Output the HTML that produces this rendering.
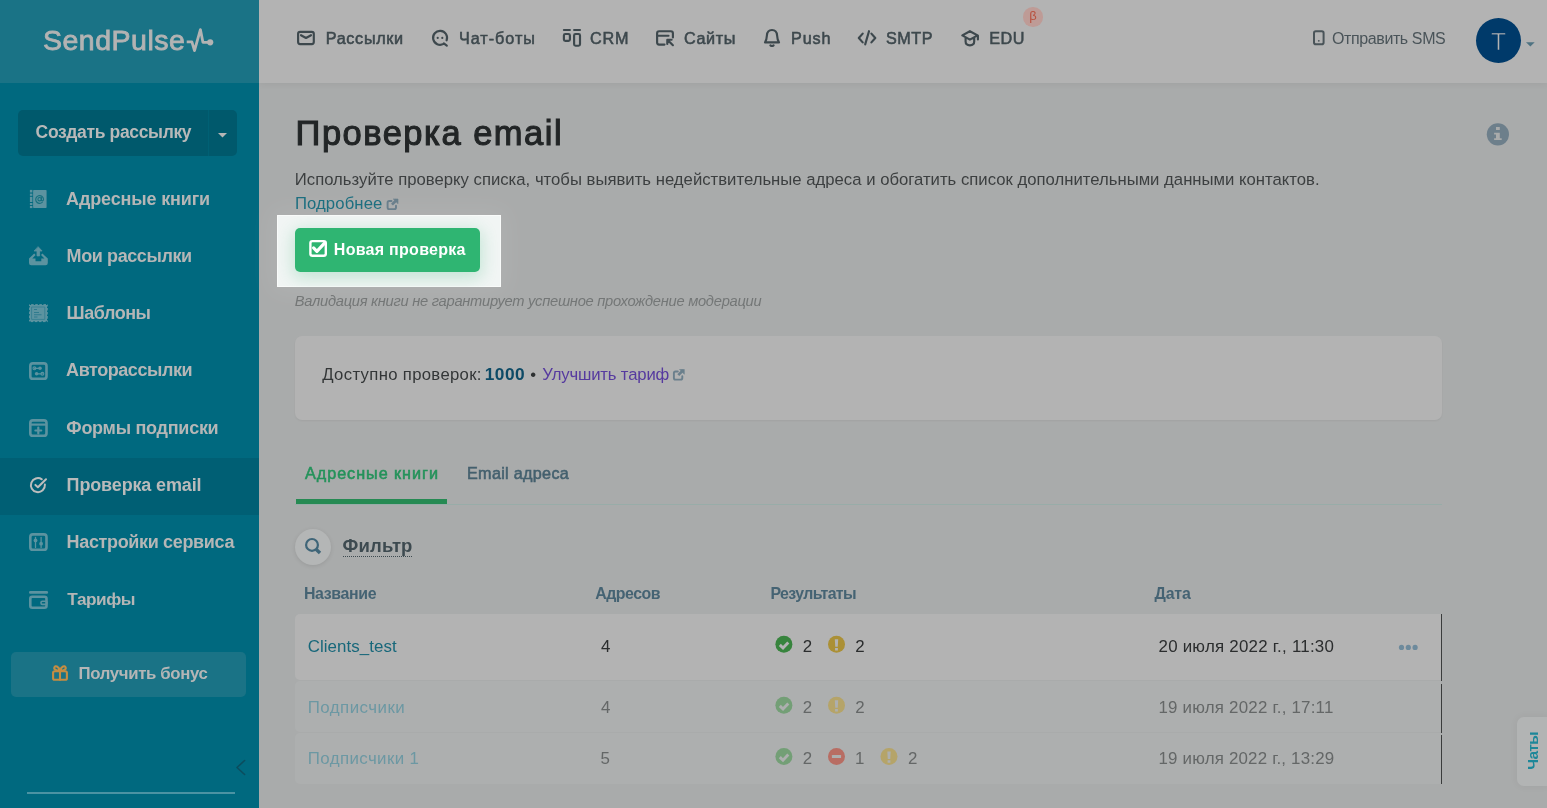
<!DOCTYPE html>
<html lang="ru">
<head>
<meta charset="utf-8">
<title>Проверка email</title>
<style>
*{box-sizing:border-box;margin:0;padding:0}
html,body{width:1547px;height:808px;overflow:hidden}
body{position:relative;background:#a9abab;font-family:"Liberation Sans",sans-serif}
.t{position:absolute;white-space:nowrap;line-height:normal}
#txt{position:absolute;left:0;top:0;width:1547px;height:808px;will-change:transform}
svg{position:absolute;overflow:visible}
/* sidebar */
#side{position:absolute;left:0;top:0;width:259px;height:808px;background:#00697f}
#sidehead{position:absolute;left:0;top:0;width:259px;height:83px;background:#1a7386}
#createbtn{position:absolute;left:18px;top:110px;width:219px;height:45.5px;border-radius:5px;background:#00596c}
#createbtn i{position:absolute;left:190px;top:0;width:1px;height:100%;background:#006074}
#active{position:absolute;left:0;top:458px;width:259px;height:56.5px;background:#005f74}
#bonusbtn{position:absolute;left:11px;top:652px;width:235px;height:45px;border-radius:5px;background:#1a7386}
#sideline{position:absolute;left:27px;top:792px;width:208px;height:2px;background:#4b93a3}
/* top */
#top{position:absolute;left:259px;top:0;width:1288px;height:83px;background:#b3b3b3;box-shadow:0 1px 7px rgba(0,0,0,.06)}
#avatar{position:absolute;left:1475.7px;top:18px;width:45px;height:45px;border-radius:50%;background:#003a6a}
#betab{position:absolute;left:1023px;top:7px;width:19.5px;height:19.5px;border-radius:50%;background:#be9b96}
/* main */
#hl{position:absolute;left:277px;top:215px;width:224px;height:72px;background:#f1f5f4;box-shadow:inset 0 0 0 1px rgba(255,255,255,.55),0 0 24px 6px rgba(255,255,255,.08)}
#hl .glow{position:absolute;left:0;top:0;width:100%;height:100%;overflow:hidden}
#hl .glow b{position:absolute;left:18px;top:13px;width:185px;height:44px;border-radius:5px;box-shadow:0 4px 16px 2px rgba(47,181,112,.24)}
#gbtn{position:absolute;left:295px;top:228px;width:185px;height:44px;border-radius:5px;background:#2fb572}
#card{position:absolute;left:295px;top:336px;width:1147px;height:84px;border-radius:7px;background:#b3b3b3;box-shadow:0 1px 2px rgba(0,0,0,.05)}
#tabline{position:absolute;left:295px;top:504px;width:1147px;height:1px;background:#98aca8}
#tabact{position:absolute;left:295.5px;top:499px;width:151.5px;height:5px;background:#268a53}
#fcircle{position:absolute;left:295px;top:529px;width:36px;height:36px;border-radius:50%;background:#b4b6b6;box-shadow:0 1px 4px rgba(0,0,0,.10)}
#fdots{position:absolute;left:343px;top:556px;width:69px;height:0;border-top:1px dotted #3d4a50}
.row{position:absolute;left:295px;width:1146px;border-radius:5px 0 0 5px}
#row1{top:614px;height:66px;background:#b3b3b3}
#row2{top:681px;height:50.6px;background:#adafaf}
#row3{top:732.8px;height:51px;background:#adafaf}
#vline{position:absolute;left:1441px;top:614px;width:1px;height:170px;background:#3a3c3c}
.vgap{position:absolute;left:1441px;width:1px;background:#a9abab}
#chat{will-change:transform;position:absolute;left:1517px;top:717px;width:30px;height:69px;border-radius:7px 0 0 7px;background:#b2b4b4;box-shadow:0 0 8px rgba(0,0,0,.05)}
#chat span{position:absolute;left:16.4px;top:34px;transform:translate(-50%,-50%) rotate(-90deg);font-weight:700;font-size:15.5px;color:#1d8799;white-space:nowrap;letter-spacing:-.75px;line-height:normal}
.dotc{position:absolute;width:17px;height:17px;border-radius:50%}
</style>
</head>
<body>
<div id="top"></div>
<div id="side"></div>
<div id="sidehead"></div>
<div id="createbtn"><i></i></div>
<div id="active"></div>
<div id="bonusbtn"></div>
<div id="sideline"></div>
<div id="avatar"></div>
<div id="betab"></div>
<div id="hl"><div class="glow"><b></b></div></div>
<div id="gbtn"></div>
<div id="card"></div>
<div id="tabline"></div>
<div id="tabact"></div>
<div id="fcircle"></div>
<div id="fdots"></div>
<div class="row" id="row1"></div>
<div class="row" id="row2"></div>
<div class="row" id="row3"></div>
<div id="vline"></div>
<div class="vgap" style="top:681.3px;height:2.6px"></div>
<div class="vgap" style="top:733.2px;height:2.2px"></div>
<div id="chat"><span>Чаты</span></div>
<svg id="icons" width="1547" height="808" viewBox="0 0 1547 808" style="left:0;top:0" fill="none" stroke-linecap="round" stroke-linejoin="round">
<!-- logo pulse -->
<path d="M186.7 41.8H191.9L194.5 50.6L200.4 29.6L202.9 42.3H208" stroke="#b3b3b3" stroke-width="2.8" stroke-linejoin="round" stroke-linecap="butt"/>
<circle cx="210.2" cy="42.3" r="3.1" fill="#b3b3b3"/>
<!-- create caret -->
<path d="M218 133H227L222.5 137.5Z" fill="#b5b6b6"/>
<!-- sidebar icons -->
<g fill="#5c93a0">
 <rect x="33.1" y="189.9" width="13.5" height="18.2" rx="0.8"/>
 <rect x="29.9" y="189.9" width="2.5" height="2.6"/><rect x="29.9" y="193.6" width="2.5" height="2.2"/><rect x="29.9" y="196.8" width="2.5" height="5.2"/><rect x="29.9" y="203" width="2.5" height="2"/><rect x="29.9" y="205.9" width="2.5" height="2.2"/>
</g>
<path d="M42.2 202.4A3.9 3.9 0 1 1 43.5 199.2Q43.4 200.9 42.3 200.9Q41.4 200.9 41.4 199.8V197.6" stroke="#16707f" stroke-width="1.15"/><circle cx="39.6" cy="199.2" r="1.7" stroke="#16707f" stroke-width="1.1"/>
<!-- outbox -->
<path d="M38.3 246.9L42.1 251H39.6V255.9H37V251H34.5Z" fill="#5c93a0" stroke="#5c93a0" stroke-width="0.8"/>
<path fill-rule="evenodd" d="M34.2 253.6L29 258.4V263Q29 265.3 31.3 265.3H45.5Q47.8 265.3 47.8 263V258.4L42.4 253.6L41 255L44.5 258.6H41.3V261.2H35.5V258.6H32.3L35.6 255Z" fill="#5c93a0"/>
<!-- stamp -->
<rect x="29" y="304.1" width="18.8" height="18" fill="#5c93a0"/>
<rect x="29" y="304.1" width="18.8" height="18" stroke="#00697f" stroke-width="1.6" stroke-dasharray="1.5 2.6" stroke-dashoffset="-0.6" stroke-linecap="butt"/>
<rect x="32" y="307" width="12.8" height="12.4" stroke="#3a8193" stroke-width="1"/>
<path d="M34 309.5H37M34 312.5H39M34 314.7H41.5M34 317H37.5" stroke="#2f7b8e" stroke-width="1.1" stroke-linecap="butt"/>
<!-- automation -->
<g stroke="#5c93a0">
 <rect x="30.3" y="363.4" width="16.2" height="15.4" rx="2.6" stroke-width="2.6"/>
 <path d="M34.4 368.3H40M36.6 373.8H42.4" stroke-width="1.2"/>
 <circle cx="34.4" cy="368.3" r="1.4" stroke-width="1.1"/><circle cx="40" cy="368.3" r="1.8" fill="#5c93a0" stroke="none"/>
 <circle cx="36.6" cy="373.8" r="1.8" fill="#5c93a0" stroke="none"/><circle cx="42.4" cy="373.8" r="1.4" stroke-width="1.1"/>
<!-- form -->
 <rect x="30.3" y="420.4" width="16.2" height="15.4" rx="2.6" stroke-width="2.6"/>
 <path d="M31 424.6H46" stroke-width="2.2" stroke-linecap="butt"/>
 <path d="M38.3 427.6V433.4M35.4 430.5H41.2" stroke-width="2.2"/>
<!-- settings -->
 <rect x="30.3" y="534.4" width="16.2" height="15.4" rx="2.6" stroke-width="2.6"/>
 <path d="M35.5 537.3V547.4M41.1 537.3V547.4" stroke-width="1.3"/>
 <circle cx="35.5" cy="540.4" r="1.9" fill="#5c93a0" stroke="none"/><circle cx="41.1" cy="543.7" r="1.9" fill="#5c93a0" stroke="none"/>
<!-- wallet -->
 <path d="M30.3 592.4H46.8" stroke-width="2.6"/>
 <rect x="30.3" y="596.7" width="16.2" height="11.1" rx="2" stroke-width="2.6"/>
 <rect x="41" y="601.2" width="6" height="3.2" rx="1.4" stroke-width="1.6"/>
</g>
<!-- check circle (active) -->
<path d="M41.8 479.3A7 7 0 1 0 44.9 484.6" stroke="#bdbdbd" stroke-width="2"/>
<path d="M35.4 484.9L37.9 487.2L46 479.2" stroke="#bdbdbd" stroke-width="2"/>
<!-- gift -->
<g stroke="#c58d42" stroke-width="2.1">
 <rect x="53.1" y="671.2" width="13.8" height="8.6" rx="1.6"/>
 <path d="M60 671.2V679.8"/>
 <path d="M60 670.8C58.5 666 55.2 665.2 54.4 667.4C53.6 669.6 56.5 670.6 60 670.8C61.5 666 64.8 665.2 65.6 667.4C66.4 669.6 63.5 670.6 60 670.8Z"/>
</g>
<!-- sidebar chevron -->
<path d="M244.6 760.5L237 767.5L244.6 774.5" stroke="#0b4d5e" stroke-width="1.6"/>
<!-- top nav icons -->
<g stroke="#3d484d" stroke-width="2.15">
 <rect x="298.1" y="31.8" width="15.7" height="12.3" rx="2"/>
 <path d="M301 35.2L306 38L311 35.2"/>
 <path d="M446.6 40.3A7 7 0 1 0 443.5 43.9M443.8 43.4L446.8 45.6"/>
 <path d="M563.9 30H569.9M574.1 30H580"/>
 <rect x="563.9" y="34" width="6" height="6.8" rx="1.4"/>
 <rect x="574.1" y="34" width="5.9" height="11.7" rx="1.4"/>
 <path d="M664.5 44.6H659.1Q657.1 44.6 657.1 42.6V33.2Q657.1 31.2 659.1 31.2H670.9Q672.9 31.2 672.9 33.2V37.5M657.5 35.7H668.5"/>
 <path d="M672.9 45.2L667.6 40M667.3 44V39.7H671.6"/>
 <path d="M765 42.4H779C777.6 40.5 777.3 38.8 777.1 35.5C776.9 32.2 774.8 30 772 30C769.2 30 767.1 32.2 766.9 35.5C766.7 38.8 766.4 40.5 765 42.4Z"/>
 <path d="M770.4 45.4Q772 46.6 773.6 45.4"/>
 <path d="M862.7 33.6L858.8 38L862.7 42.4M871.4 33.6L875.3 38L871.4 42.4M869 31.2L865.2 44.4"/>
 <path d="M969.9 31.2L962.3 35.4L969.9 39.6L977.6 35.4ZM977.9 35.6V39.4M965.6 38V41.6Q965.6 45.3 969.9 45.3Q974.2 45.3 974.2 41.6V38"/>
</g>
<circle cx="437.7" cy="37.9" r="1.1" fill="#3d484d"/><circle cx="442.3" cy="37.9" r="1.1" fill="#3d484d"/>
<!-- phone -->
<rect x="1314" y="31.2" width="9.6" height="13" rx="1.8" stroke="#4a5459" stroke-width="2"/>
<circle cx="1318.8" cy="40.8" r="0.9" fill="#4a5459"/>
<!-- avatar caret -->
<path d="M1526 42.2H1534.7L1530.35 46.4Z" fill="#4f7382"/>
<!-- info -->
<circle cx="1497.9" cy="134.3" r="11.1" fill="#6d7f8b"/>
<path d="M1496 127.1H1499.8V130.1H1496ZM1494.1 132.8H1499.8V138.3H1501.7V140H1494.1V138.3H1496V134.5H1494.1Z" fill="#a9abab"/>
<!-- ext link icons -->
<g stroke="#6a7f8c" stroke-width="1.9" id="ext1">
 <path d="M391.5 201H389.2Q387.6 201 387.6 202.6V207.5Q387.6 209.1 389.2 209.1H394.4Q396 209.1 396 207.5V205.8"/>
 <path d="M392 204.6L396.8 199.8" stroke-width="2.7" stroke-linecap="butt"/>
 <path d="M393.6 199H398V203.4Z" fill="#6a7f8c" stroke-width="0.6"/>
</g>
<g stroke="#6a7f8c" stroke-width="1.9" transform="translate(286.3 170.5)">
 <path d="M391.5 201H389.2Q387.6 201 387.6 202.6V207.5Q387.6 209.1 389.2 209.1H394.4Q396 209.1 396 207.5V205.8"/>
 <path d="M392 204.6L396.8 199.8" stroke-width="2.7" stroke-linecap="butt"/>
 <path d="M393.6 199H398V203.4Z" fill="#6a7f8c" stroke-width="0.6"/>
</g>
<!-- button checkbox -->
<rect x="310.4" y="241.1" width="15.4" height="14.7" rx="2" stroke="#fff" stroke-width="2.4"/>
<path d="M313.6 247.9L316.9 251.3L324.3 243.3" stroke="#fff" stroke-width="3.2"/>
<!-- magnifier -->
<circle cx="312" cy="544.9" r="5.9" stroke="#3f6578" stroke-width="2.2"/>
<path d="M316 549.2L320 552.9" stroke="#3f6578" stroke-width="3.4" stroke-linecap="butt"/>
<!-- row dots -->
<g fill="#6d8a9c"><circle cx="1401.5" cy="647.4" r="2.6"/><circle cx="1408.3" cy="647.4" r="2.6"/><circle cx="1415.1" cy="647.4" r="2.6"/></g>
<!-- status icons -->
<circle cx="783.9" cy="644.3" r="8.5" fill="#37843d"/><path d="M779.8 644.9L783.0 648.0L788.3 642.4" stroke="#b3b3b3" stroke-width="2.9" stroke-linecap="butt" stroke-linejoin="miter"/><circle cx="836.5" cy="644.3" r="8.5" fill="#ab9036"/><path d="M834.8 639.3H838.2L837.75 646.6999999999999H835.25ZM835.1 648.0H837.9V650.5H835.1Z" fill="#b3b3b3"/>
<circle cx="783.9" cy="705.3" r="8.5" fill="#739f76"/><path d="M779.8 705.9L783.0 709.0L788.3 703.4" stroke="#adafaf" stroke-width="2.9" stroke-linecap="butt" stroke-linejoin="miter"/><circle cx="836.5" cy="705.3" r="8.5" fill="#b5a469"/><path d="M834.8 700.3H838.2L837.75 707.6999999999999H835.25ZM835.1 709.0H837.9V711.5H835.1Z" fill="#adafaf"/>
<circle cx="783.9" cy="756.5" r="8.5" fill="#739f76"/><path d="M779.8 757.1L783.0 760.2L788.3 754.6" stroke="#adafaf" stroke-width="2.9" stroke-linecap="butt" stroke-linejoin="miter"/><circle cx="836.5" cy="756.5" r="8.5" fill="#b86d63"/><rect x="831.9" y="754.9" width="9.2" height="3.2" rx="0.6" fill="#adafaf"/><circle cx="889" cy="756.5" r="8.5" fill="#b5a469"/><path d="M887.3 751.5H890.7L890.25 758.9H887.75ZM887.6 760.2H890.4V762.7H887.6Z" fill="#adafaf"/>
</svg>

<div id="txt">
<aside>
<span class="t" style="left:43.00px;top:24.00px;font-size:28.5px;font-weight:400;color:#b3b3b3;letter-spacing:0.500px;-webkit-text-stroke:0.85px #b3b3b3;">SendPulse</span>
<span class="t" style="left:35.60px;top:122.00px;font-size:17.5px;font-weight:700;color:#b8b9b9;letter-spacing:-0.353px;">Создать рассылку</span>
<span class="t" style="left:66.10px;top:189.00px;font-size:18px;font-weight:700;color:#b5b6b6;letter-spacing:-0.154px;">Адресные книги</span>
<span class="t" style="left:66.60px;top:246.00px;font-size:18px;font-weight:700;color:#b5b6b6;letter-spacing:-0.400px;">Мои рассылки</span>
<span class="t" style="left:66.60px;top:303.00px;font-size:18px;font-weight:700;color:#b5b6b6;letter-spacing:-0.467px;">Шаблоны</span>
<span class="t" style="left:66.10px;top:360.00px;font-size:18px;font-weight:700;color:#b5b6b6;letter-spacing:-0.445px;">Авторассылки</span>
<span class="t" style="left:66.30px;top:418.00px;font-size:18px;font-weight:700;color:#b5b6b6;letter-spacing:-0.269px;">Формы подписки</span>
<span class="t" style="left:66.60px;top:475.00px;font-size:18px;font-weight:700;color:#b9baba;letter-spacing:-0.146px;">Проверка email</span>
<span class="t" style="left:66.60px;top:532.00px;font-size:18px;font-weight:700;color:#b5b6b6;letter-spacing:-0.344px;">Настройки сервиса</span>
<span class="t" style="left:67.30px;top:589.00px;font-size:17.2px;font-weight:700;color:#b5b6b6;letter-spacing:-0.460px;">Тарифы</span>
<span class="t" style="left:78.60px;top:664.00px;font-size:16.8px;font-weight:700;color:#b5b6b6;letter-spacing:-0.362px;">Получить бонус</span>
</aside>
<nav>
<span class="t" style="left:325.70px;top:29.00px;font-size:16.2px;font-weight:400;color:#3d484d;letter-spacing:0.686px;-webkit-text-stroke:0.55px currentColor;">Рассылки</span>
<span class="t" style="left:459.00px;top:29.00px;font-size:16.2px;font-weight:400;color:#3d484d;letter-spacing:0.964px;-webkit-text-stroke:0.55px currentColor;">Чат-боты</span>
<span class="t" style="left:590.00px;top:29.00px;font-size:16.2px;font-weight:400;color:#3d484d;letter-spacing:0.750px;-webkit-text-stroke:0.55px currentColor;">CRM</span>
<span class="t" style="left:684.00px;top:29.00px;font-size:16.2px;font-weight:400;color:#3d484d;letter-spacing:0.625px;-webkit-text-stroke:0.55px currentColor;">Сайты</span>
<span class="t" style="left:791.00px;top:29.00px;font-size:16.2px;font-weight:400;color:#3d484d;letter-spacing:0.833px;-webkit-text-stroke:0.55px currentColor;">Push</span>
<span class="t" style="left:886.00px;top:29.00px;font-size:16.2px;font-weight:400;color:#3d484d;letter-spacing:0.500px;-webkit-text-stroke:0.55px currentColor;">SMTP</span>
<span class="t" style="left:989.20px;top:29.00px;font-size:16.2px;font-weight:400;color:#3d484d;letter-spacing:0.550px;-webkit-text-stroke:0.55px currentColor;">EDU</span>
<span class="t" style="left:1029.15px;top:8.00px;font-size:13px;font-weight:400;color:#b8503e;">β</span>
<span class="t" style="left:1332.00px;top:30.00px;font-size:16px;font-weight:400;color:#4a5459;letter-spacing:-0.392px;">Отправить SMS</span>
<span class="t" style="left:1490.95px;top:28.00px;font-size:24.5px;font-weight:400;color:#b3b3b3;-webkit-text-stroke:0.6px #003a6a;">T</span>
</nav>
<main>
<h1 class="t" style="left:295.60px;top:114.00px;font-size:34.5px;font-weight:400;color:#222526;letter-spacing:1.492px;-webkit-text-stroke:1.1px currentColor;">Проверка email</h1>
<span class="t" style="left:294.80px;top:170.00px;font-size:16.7px;font-weight:400;color:#3c3f40;letter-spacing:0.010px;">Используйте проверку списка, чтобы выявить недействительные адреса и обогатить список дополнительными данными контактов.</span>
<span class="t" style="left:294.90px;top:194.00px;font-size:16.7px;font-weight:400;color:#1d6f80;letter-spacing:0.113px;">Подробнее</span>
<span class="t" style="left:333.80px;top:241.00px;font-size:16px;font-weight:700;color:#ffffff;letter-spacing:0.277px;">Новая проверка</span>
<span class="t" style="left:294.70px;top:293.00px;font-size:14.7px;font-weight:400;color:#747777;letter-spacing:-0.262px;font-style:italic;">Валидация книги не гарантирует успешное прохождение модерации</span>
<span class="t" style="left:322.30px;top:365.00px;font-size:16.7px;font-weight:400;color:#333637;letter-spacing:0.335px;">Доступно проверок:</span>
<span class="t" style="left:484.70px;top:364.00px;font-size:17.3px;font-weight:700;color:#0d4a66;letter-spacing:0.533px;">1000</span>
<span class="t" style="left:530.25px;top:365.00px;font-size:16.7px;font-weight:400;color:#2e3132;">•</span>
<span class="t" style="left:542.30px;top:365.00px;font-size:16.7px;font-weight:400;color:#563a9f;letter-spacing:-0.154px;">Улучшить тариф</span>
<span class="t" style="left:305.00px;top:464.00px;font-size:16.2px;font-weight:400;color:#24925a;letter-spacing:0.962px;-webkit-text-stroke:0.55px currentColor;">Адресные книги</span>
<span class="t" style="left:467.00px;top:464.00px;font-size:16.2px;font-weight:400;color:#44606e;letter-spacing:0.300px;-webkit-text-stroke:0.55px currentColor;">Email адреса</span>
<span class="t" style="left:342.60px;top:535.00px;font-size:18.5px;font-weight:700;color:#3d4a50;letter-spacing:0.160px;">Фильтр</span>
<span class="t" style="left:303.90px;top:585.00px;font-size:15.9px;font-weight:700;color:#456373;letter-spacing:-0.343px;">Название</span>
<span class="t" style="left:595.20px;top:585.00px;font-size:15.9px;font-weight:700;color:#456373;letter-spacing:-0.483px;">Адресов</span>
<span class="t" style="left:770.50px;top:585.00px;font-size:15.9px;font-weight:700;color:#456373;letter-spacing:-0.611px;">Результаты</span>
<span class="t" style="left:1154.50px;top:585.00px;font-size:15.9px;font-weight:700;color:#456373;letter-spacing:-0.167px;">Дата</span>
<span class="t" style="left:307.70px;top:637.00px;font-size:16.9px;font-weight:400;color:#17677a;letter-spacing:0.064px;">Clients_test</span>
<span class="t" style="left:601.10px;top:637.00px;font-size:16.9px;font-weight:400;color:#2b2d2e;">4</span>
<span class="t" style="left:802.85px;top:637.00px;font-size:16.9px;font-weight:400;color:#2b2d2e;">2</span>
<span class="t" style="left:855.30px;top:637.00px;font-size:16.9px;font-weight:400;color:#2b2d2e;">2</span>
<span class="t" style="left:1158.50px;top:637.00px;font-size:16.9px;font-weight:400;color:#2b2d2e;letter-spacing:0.238px;">20 июля 2022 г., 11:30</span>
<span class="t" style="left:307.70px;top:698.00px;font-size:16.9px;font-weight:400;color:#6c98a3;letter-spacing:0.467px;">Подписчики</span>
<span class="t" style="left:601.10px;top:698.00px;font-size:16.9px;font-weight:400;color:#646767;">4</span>
<span class="t" style="left:802.85px;top:698.00px;font-size:16.9px;font-weight:400;color:#646767;">2</span>
<span class="t" style="left:855.30px;top:698.00px;font-size:16.9px;font-weight:400;color:#646767;">2</span>
<span class="t" style="left:1158.50px;top:698.00px;font-size:16.9px;font-weight:400;color:#646767;letter-spacing:0.214px;">19 июля 2022 г., 17:11</span>
<span class="t" style="left:307.70px;top:749.00px;font-size:16.9px;font-weight:400;color:#6c98a3;letter-spacing:0.391px;">Подписчики 1</span>
<span class="t" style="left:600.60px;top:749.00px;font-size:16.9px;font-weight:400;color:#646767;">5</span>
<span class="t" style="left:802.85px;top:749.00px;font-size:16.9px;font-weight:400;color:#646767;">2</span>
<span class="t" style="left:854.90px;top:749.00px;font-size:16.9px;font-weight:400;color:#646767;">1</span>
<span class="t" style="left:908.00px;top:749.00px;font-size:16.9px;font-weight:400;color:#646767;">2</span>
<span class="t" style="left:1158.50px;top:749.00px;font-size:16.9px;font-weight:400;color:#646767;letter-spacing:0.190px;">19 июля 2022 г., 13:29</span>
</main>
</div>
</body>
</html>
